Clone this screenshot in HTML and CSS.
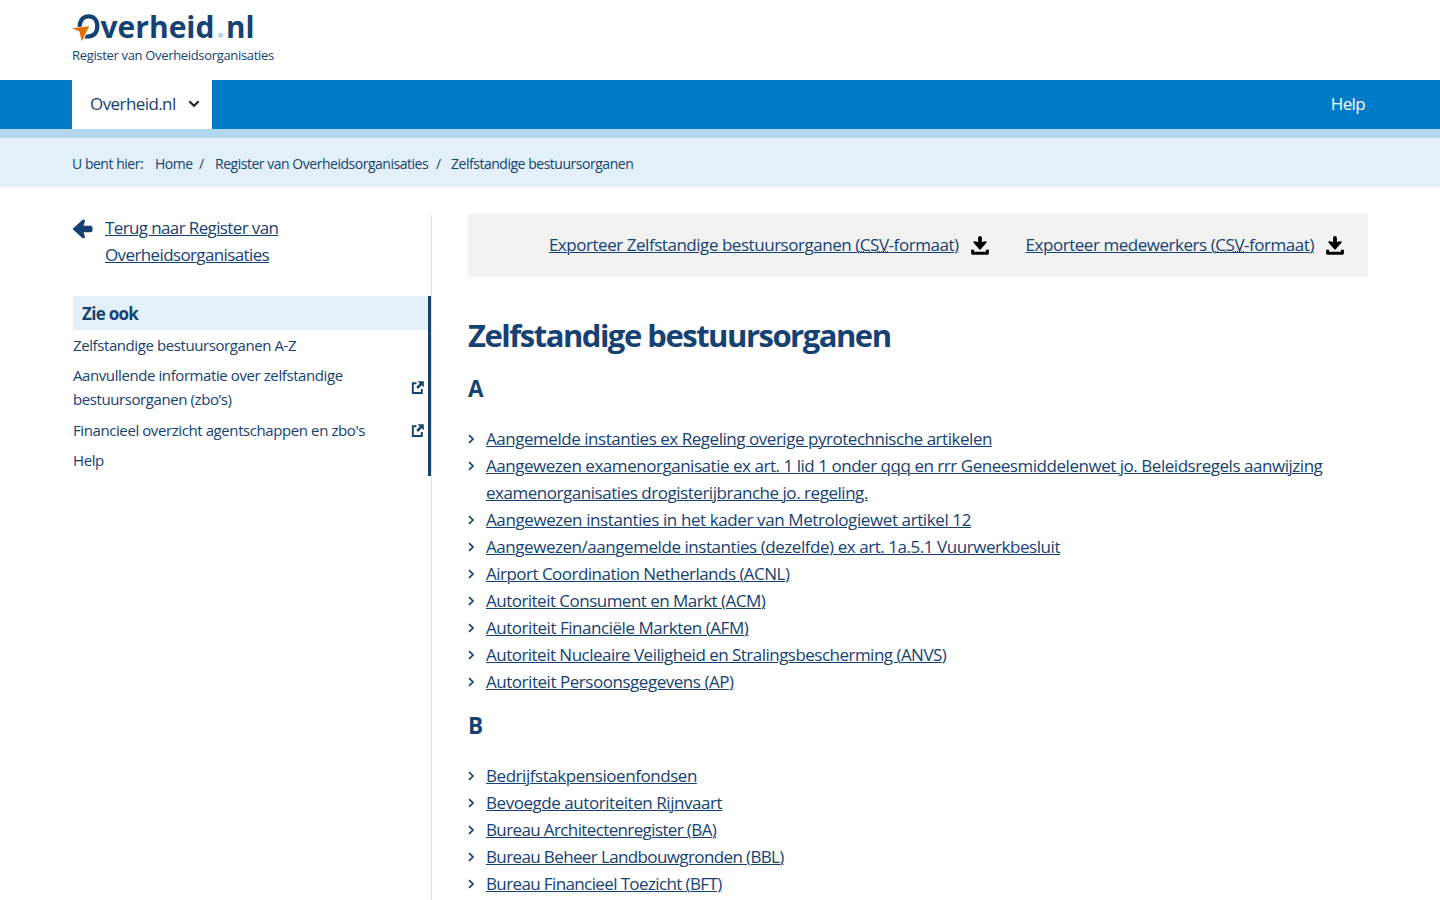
FILE: index.html
```html
<!DOCTYPE html>
<html lang="nl">
<head>
<meta charset="utf-8">
<title>Zelfstandige bestuursorganen</title>
<link rel="stylesheet" href="styles.css">
</head>
<body>
<svg class="defs" aria-hidden="true">
  <symbol id="chev" viewBox="0 0 8 10"><path d="M1 1.200 5 5 1 8.800" fill="none" stroke="currentColor" stroke-width="1.700"/></symbol>
  <symbol id="ext" viewBox="0 0 13 13"><path d="M5.500 2.200H1.800V12H10.800V8" fill="none" stroke="currentColor" stroke-width="1.900"/><path d="M6.600 .2H12.800V6.300L10.700 4.300 7.100 8 5.200 6.100 8.800 2.400Z" fill="currentColor"/></symbol>
  <symbol id="down" viewBox="0 0 18 19"><path d="M9 2V8" stroke="#000" stroke-width="3.800" stroke-linecap="round"/><path d="M2.400 6.600Q2.200 5 4 5.300L9 6.500 14 5.300Q15.800 5 15.600 6.600L10 13Q9 14 8 13Z"/><path d="M1.600 13.800V17.300H16.400V13.800" fill="none" stroke="#000" stroke-width="3" stroke-linejoin="round"/></symbol>
</svg>
<header class="header wrap">
  <svg class="logo" width="190" height="40" viewBox="72 4 190 40" role="img" aria-label="Overheid.nl">
    <path d="M79.700 27C79.700 20.500 82.800 16.400 88.700 16.400C94.200 16.400 97.300 20.300 97.300 26.300C97.300 32.600 94 36.500 87.600 36.500H84.500" fill="none" stroke="#154273" stroke-width="4.200"/>
    <path d="M76 27.300 90.500 25.600 84.600 37.800 79.600 32Z" fill="#fff"/>
    <path d="M72 28.200 89.300 26.200 81.600 41.200 79.500 31.500Z" fill="#e17000"/>
    <text class="logo-text" x="100.500" y="38" textLength="114" lengthAdjust="spacingAndGlyphs">verheid</text>
    <circle cx="220.700" cy="35.300" r="2.500" fill="#b2d7ee"/>
    <text class="logo-text" x="226" y="38" textLength="28.500" lengthAdjust="spacingAndGlyphs">nl</text>
  </svg>
  <p class="tagline">Register van Overheidsorganisaties</p>
</header>
<nav class="nav"><div class="wrap nav-row">
  <a class="tab">Overheid.nl <svg width="12" height="8" viewBox="0 0 12 8"><path d="M1.300 1.200 6 5.800 10.700 1.200" fill="none" stroke="#222" stroke-width="2.100"/></svg></a>
  <a class="help">Help</a>
</div></nav>
<div class="crumbs"><div class="wrap crumb-row">
  <span class="here">U bent hier:</span><span class="c1">Home</span><span class="s1">/</span><span class="c2">Register van Overheidsorganisaties</span><span class="s2">/</span><span>Zelfstandige bestuursorganen</span>
</div></div>
<div class="wrap content">
  <aside class="side">
    <a class="back"><svg width="21" height="20" viewBox="0 0 21 20"><path d="M.5 10 10 1.200Q12.500-.3 13 2L11.500 6.700H18.500Q20.500 6.700 20.500 8.500V11.500Q20.500 13.300 18.500 13.300H11.500L13 18Q12.500 20.300 10 18.800Z" fill="currentColor"/></svg><span><u>Terug naar Register van Overheidsorganisaties</u></span></a>
    <div class="also">
      <h2 class="also-title">Zie ook</h2>
      <a class="side-link">Zelfstandige bestuursorganen A-Z</a>
      <a class="side-link"><span>Aanvullende informatie over zelfstandige bestuursorganen (zbo’s)</span><svg class="ext"><use href="#ext"/></svg></a>
      <a class="side-link"><span>Financieel overzicht agentschappen en zbo's</span><svg class="ext"><use href="#ext"/></svg></a>
      <a class="side-link">Help</a>
    </div>
  </aside>
  <main class="main">
    <div class="export">
      <a class="dl"><u>Exporteer Zelfstandige bestuursorganen (<abbr>CSV</abbr>-formaat)</u><svg class="down"><use href="#down"/></svg></a>
      <a class="dl"><u>Exporteer medewerkers (<abbr>CSV</abbr>-formaat)</u><svg class="down"><use href="#down"/></svg></a>
    </div>
    <h1 class="title">Zelfstandige bestuursorganen</h1>
    <h2 class="letter">A</h2>
    <ul class="list">
      <li><svg class="chev"><use href="#chev"/></svg><u>Aangemelde instanties ex Regeling overige pyrotechnische artikelen</u></li>
      <li><svg class="chev"><use href="#chev"/></svg><u>Aangewezen examenorganisatie ex art. 1 lid 1 onder qqq en rrr Geneesmiddelenwet jo. Beleidsregels aanwijzing examenorganisaties drogisterijbranche jo. regeling.</u></li>
      <li class="loose"><svg class="chev"><use href="#chev"/></svg><u>Aangewezen instanties in het kader van Metrologiewet artikel 12</u></li>
      <li class="wide"><svg class="chev"><use href="#chev"/></svg><u>Aangewezen/aangemelde instanties (dezelfde) ex art. 1a.5.1 Vuurwerkbesluit</u></li>
      <li class="snug"><svg class="chev"><use href="#chev"/></svg><u>Airport Coordination Netherlands (ACNL)</u></li>
      <li class="snug"><svg class="chev"><use href="#chev"/></svg><u>Autoriteit Consument en Markt (ACM)</u></li>
      <li><svg class="chev"><use href="#chev"/></svg><u>Autoriteit Financiële Markten (AFM)</u></li>
      <li class="snug"><svg class="chev"><use href="#chev"/></svg><u>Autoriteit Nucleaire Veiligheid en Stralingsbescherming (ANVS)</u></li>
      <li><svg class="chev"><use href="#chev"/></svg><u>Autoriteit Persoonsgegevens (AP)</u></li>
    </ul>
    <h2 class="letter">B</h2>
    <ul class="list">
      <li class="wide"><svg class="chev"><use href="#chev"/></svg><u>Bedrijfstakpensioenfondsen</u></li>
      <li class="wide"><svg class="chev"><use href="#chev"/></svg><u>Bevoegde autoriteiten Rijnvaart</u></li>
      <li class="tight"><svg class="chev"><use href="#chev"/></svg><u>Bureau Architectenregister (BA)</u></li>
      <li class="tight"><svg class="chev"><use href="#chev"/></svg><u>Bureau Beheer Landbouwgronden (BBL)</u></li>
      <li class="tight"><svg class="chev"><use href="#chev"/></svg><u>Bureau Financieel Toezicht (BFT)</u></li>
    </ul>
  </main>
</div>
</body>
</html>
```
FILE: styles.css
```css
* { box-sizing: border-box; }
html { overflow: hidden; }
body { margin: 0; height: 900px; overflow: hidden; background: #fff; color: #154273; font: 17px/27px "Open Sans", "Noto Sans", sans-serif; letter-spacing: -.465px; }
h1, h2, p, ul { margin: 0; padding: 0; }
svg { flex: none; }
u { text-decoration-thickness: 1px; text-underline-offset: 1px; }
.defs { display: none; }
.wrap { width: 1296px; margin: 0 auto; }
.header { height: 80px; padding-top: 4px; }
.logo { display: block; overflow: visible; }
.logo-text { font: 700 31px "Open Sans", sans-serif; letter-spacing: 0; fill: #154273; }
.tagline { font-size: 13px; line-height: 20px; letter-spacing: -.33px; margin-top: 1px; }
.nav { background: #007bc7; height: 58px; border-bottom: 9px solid #b2d7ee; }
.nav-row { display: flex; justify-content: space-between; height: 49px; line-height: 47px; }
.tab { width: 140px; background: #fff; padding: 0 12px 1px 18px; display: flex; justify-content: space-between; align-items: flex-start; letter-spacing: -.58px; }
.tab svg { margin-top: 20px; }
.help { color: #fff; padding-right: 3px; letter-spacing: -.65px; }
.crumbs { background: #e3f0f9; height: 49px; line-height: 51px; font-size: 14px; letter-spacing: -.475px; }
.crumb-row { display: flex; }
.here { width: 83px; }
.c1 { width: 44px; }
.s1 { width: 16px; }
.c2 { width: 221px; }
.s2 { width: 15px; }
.content { display: flex; padding-top: 27px; }
.side { width: 360px; height: 700px; border-right: 1px solid #e3e3e3; }
.back { display: flex; gap: 12px; width: 240px; letter-spacing: -.62px; }
.back svg { margin-top: 5px; }
.also { margin: 28px 0 0 1px; height: 180px; border-right: 3px solid #154273; }
.also-title { height: 34px; line-height: 35px; padding-left: 9px; background: #e3f0f9; font-size: 17px; font-weight: 700; letter-spacing: -.7px; }
.side-link { display: flex; justify-content: space-between; align-items: center; padding: 3px 4px 3.400px 0; font-size: 15px; line-height: 24px; letter-spacing: -.41px; }
.side-link span { width: 310px; }
.ext { width: 13px; height: 13px; margin-top: 1px; }
.main { width: 900px; margin-left: 36px; }
.export { height: 63px; background: #f2f2f2; display: flex; justify-content: flex-end; align-items: center; gap: 37px; padding: 0 24px 2px 0; letter-spacing: -.460px; }
.dl { display: flex; align-items: center; gap: 12px; }
.dl abbr { text-decoration: underline dotted 1px; text-underline-offset: 0; }
.down { width: 18px; height: 19px; margin-top: 2px; }
.title { margin-top: 36px; font-size: 31px; line-height: 44px; font-weight: 700; letter-spacing: -1.490px; }
.letter { font-size: 22.5px; line-height: 30px; margin-top: 17px; margin-bottom: 21px; font-weight: 700; letter-spacing: -.3px; }
.list { list-style: none; }
.list + .letter { margin-top: 16px; }
.list li { display: flex; gap: 10px; }
.list .loose { letter-spacing: -.395px; }
.list .wide { letter-spacing: -.448px; }
.list .snug { letter-spacing: -.520px; }
.list .tight { letter-spacing: -.620px; }
.chev { width: 8px; height: 10px; margin-top: 9px; }
```
